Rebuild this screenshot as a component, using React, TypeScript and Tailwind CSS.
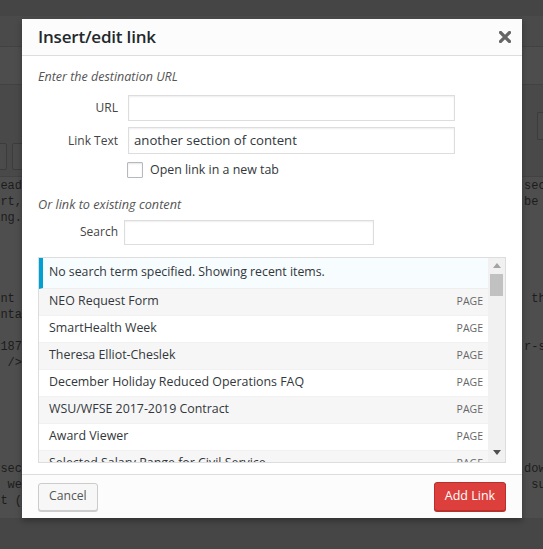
import React from 'react';

type CodeLine = { left: string; right: string };

// dimmed editor text peeking out on both sides of the dialog
const codeGroups: { mt: string; lines: CodeLine[] }[] = [
  { mt: 'mt-[1px]', lines: [{ left: 'head', right: 'sec' }, { left: 'ort,', right: 'be' }, { left: 'ing.', right: '' }] },
  { mt: 'mt-[65px]', lines: [{ left: 'ent ', right: ' th' }, { left: 'onta', right: '' }] },
  { mt: 'mt-[16px]', lines: [{ left: '-187', right: 'r-s' }, { left: "' />", right: '' }] },
  { mt: 'mt-[90px]', lines: [{ left: ' sec', right: 'dow' }, { left: 'we', right: ' su' }, { left: 'nt (', right: '' }] },
];

const results = [
  'NEO Request Form',
  'SmartHealth Week',
  'Theresa Elliot-Cheslek',
  'December Holiday Reduced Operations FAQ',
  'WSU/WFSE 2017-2019 Contract',
  'Award Viewer',
  'Selected Salary Range for Civil Service',
];

const CloseIcon = () => (
  <svg width="12" height="12" viewBox="0 0 12 12" className="block">
    <path d="M1.5 1.5 L10.5 10.5 M10.5 1.5 L1.5 10.5" stroke="#666" strokeWidth="3.2" strokeLinecap="square" />
  </svg>
);

const Background = () => (
  <div className="flex flex-col w-full h-full">
    <div className="h-[16px] bg-[#454545]" />
    <div className="h-[31px] bg-[#4a4a4a] border-b border-[#424242]" />
    <div className="h-[38px] bg-[#4d4d4d] border-b border-[#424242]" />
    <div className="h-[92px] bg-[#494949] border-b border-[#424242] flex flex-col">
      <div className="flex justify-end mt-[27px]">
        <div className="w-[6px] h-[28px] border border-r-0 border-[#3c3c3c] rounded-l-[2px] bg-[#4b4b4b]" />
      </div>
      <div className="flex gap-[5px] mt-[3px] -ml-[2px]">
        <div className="w-[9px] h-[27px] border border-[#3c3c3c] rounded-[2px] bg-[#4b4b4b]" />
        <div className="w-[14px] h-[27px] border border-[#3c3c3c] rounded-[2px] bg-[#4b4b4b]" />
      </div>
    </div>
    <div className="flex-1 bg-[#4e4e4e] flex flex-col font-['Liberation_Mono',monospace] text-[12px] leading-[16px] text-[#1c1c1c]">
      {codeGroups.map((g, gi) => (
        <div key={gi} className={`flex flex-col ${g.mt}`}>
          {g.lines.map((l, li) => (
            <div key={li} className="flex justify-between h-[16px]">
              <div className="w-[22px] overflow-hidden flex justify-end whitespace-pre">{l.left}</div>
              <div className="w-[21px] overflow-hidden pl-[2px] whitespace-pre">{l.right}</div>
            </div>
          ))}
        </div>
      ))}
    </div>
    <div className="h-[31px] bg-[#464646]" />
  </div>
);

const Field = ({ label, value, h }: { label: string; value?: string; h: string }) => (
  <div className="flex items-center">
    <label className="w-[90px] pr-[10px] text-right text-[12px] text-[#444]">{label}</label>
    <div className={`w-[327px] ${h} border border-[#dddddd] bg-white shadow-[inset_0_1px_2px_rgba(0,0,0,0.07)] px-[5px] flex items-center text-[13.2px] text-[#32373c]`}>
      {value}
    </div>
  </div>
);

const Scrollbar = () => (
  <div className="w-[17px] h-full bg-[#f1f1f1] flex flex-col items-center">
    <div className="h-[16px] flex items-center justify-center">
      <svg width="8" height="5" viewBox="0 0 8 5"><path d="M0 5 L4 0 L8 5 Z" fill="#a3a3a3" /></svg>
    </div>
    <div className="w-[13px] h-[22px] bg-[#c1c1c1]" />
    <div className="flex-1" />
    <div className="h-[16px] flex items-center justify-center mb-[1px]">
      <svg width="8" height="5" viewBox="0 0 8 5"><path d="M0 0 L8 0 L4 5 Z" fill="#505050" /></svg>
    </div>
  </div>
);

const LinkDialog = () => (
  <div className="absolute left-[22px] top-[19px] w-[500px] h-[499px] bg-white shadow-[0_3px_6px_rgba(0,0,0,0.3)] flex flex-col font-['Open_Sans',sans-serif]">
    {/* Header */}
    <div className="h-[37px] border-b border-[#dddddd] bg-[#fcfcfc] pl-[16px] pr-[11px] flex items-center justify-between">
      <h1 className="text-[17px] font-semibold text-[#23282d] tracking-[-0.2px]">Insert/edit link</h1>
      <CloseIcon />
    </div>

    {/* Body */}
    <div className="flex-1 px-[16px] flex flex-col">
      <p className="mt-[12px] text-[12.5px] leading-[18px] italic text-[#555]">Enter the destination URL</p>
      <div className="mt-[9px] flex flex-col gap-[6px]">
        <Field label="URL" h="h-[26px]" />
        <Field label="Link Text" value="another section of content" h="h-[27px]" />
      </div>
      <div className="mt-[7px] ml-[89px] flex items-center gap-[7px]">
        <div className="w-[16px] h-[16px] border border-[#b4b9be] rounded-[1px] bg-white shadow-[inset_0_1px_2px_rgba(0,0,0,0.1)]" />
        <span className="text-[12.4px] text-[#32373c]">Open link in a new tab</span>
      </div>
      <p className="mt-[15px] text-[12.7px] leading-[18px] italic text-[#555]">Or link to existing content</p>
      <div className="mt-[7px] flex items-center">
        <label className="w-[86px] pr-[6px] text-right text-[12px] text-[#444]">Search</label>
        <div className="w-[250px] h-[25px] border border-[#dddddd] bg-white shadow-[inset_0_1px_2px_rgba(0,0,0,0.07)]" />
      </div>

      {/* Results */}
      <div className="mt-[12px] h-[206px] border border-[#dddddd] flex overflow-hidden">
        <div className="flex-1 flex flex-col overflow-hidden">
          <div className="h-[31px] shrink-0 border-l-4 border-[#00a0d2] bg-[#f7fcfe] border-b border-b-[#eeeeee] pl-[6px] flex items-center text-[12.3px] text-[#32373c]">
            No search term specified. Showing recent items.
          </div>
          {results.map((r, i) => (
            <div
              key={r}
              className={`h-[27px] shrink-0 flex items-center justify-between pl-[10px] pr-[5px] border-b border-[#f1f1f1] ${i % 2 === 0 ? 'bg-[#f6f6f6]' : 'bg-white'}`}
            >
              <span className="text-[12.4px] text-[#32373c]">{r}</span>
              <span className="text-[10.5px] uppercase text-[#666]">Page</span>
            </div>
          ))}
        </div>
        <Scrollbar />
      </div>
    </div>

    {/* Footer */}
    <div className="h-[44px] border-t border-[#dddddd] bg-[#fcfcfc] px-[16px] flex items-center justify-between">
      <button className="h-[28px] px-[10px] border border-[#cccccc] rounded-[3px] bg-[#f7f7f7] shadow-[0_1px_0_#cccccc] text-[12.2px] text-[#555]">
        Cancel
      </button>
      <button className="h-[29px] w-[72px] border border-[#b8302c] rounded-[3px] bg-[#dd403c] text-[12.5px] text-white shadow-[0_1px_0_#b8302c]">
        Add Link
      </button>
    </div>
  </div>
);

export default function App() {
  return (
    <div className="relative w-[543px] h-[549px] overflow-hidden bg-[#4a4a4a]">
      <Background />
      <LinkDialog />
    </div>
  );
}
